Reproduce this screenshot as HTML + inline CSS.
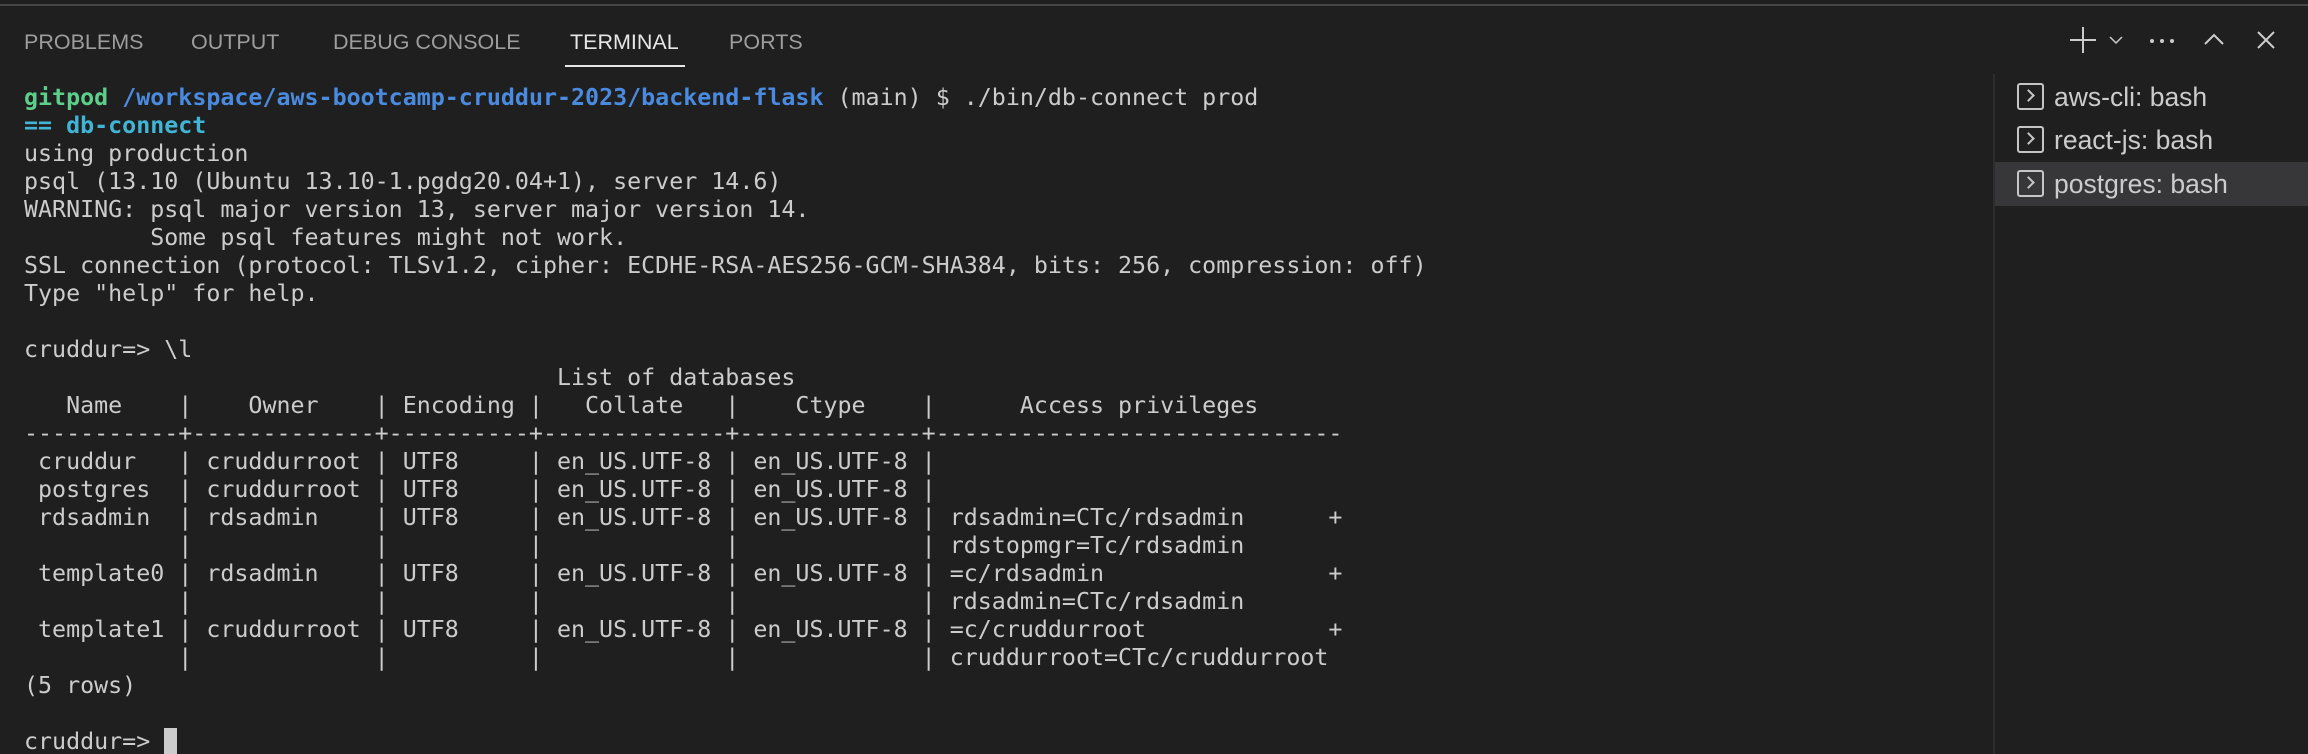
<!DOCTYPE html>
<html><head><meta charset="utf-8"><style>
html,body{margin:0;padding:0;background:#1f1f1f;width:2308px;height:754px;overflow:hidden;position:relative}
.topline{position:absolute;left:0;top:4px;width:2308px;height:2px;background:#464646}
.tab{position:absolute;top:29px;font:21.5px "Liberation Sans",sans-serif;color:#9d9d9d;white-space:nowrap;line-height:26px}
.ul{position:absolute;left:565px;top:65px;width:120px;height:2px;background:#e7e7e7}
pre{position:absolute;left:24px;top:84px;margin:0;font:23.3px/28px "DejaVu Sans Mono","Liberation Mono",monospace;color:#cccccc}
.g{color:#5ccf8a;font-weight:bold}.b{color:#4a8be0;font-weight:bold}.c{color:#40b5d6;font-weight:bold}
.cur{display:inline-block;width:13px;height:26px;background:#cccccc;vertical-align:-5px}
.div{position:absolute;left:1993px;top:74px;width:2px;height:680px;background:#2d2d2d}
.hl{position:absolute;left:1995px;top:162px;width:313px;height:44px;background:#37373a}
.item{position:absolute;left:2017px;font:26.5px "Liberation Sans",sans-serif;color:#cccccc;white-space:nowrap}
.box{display:inline-block;width:23px;height:23px;border:2px solid #c5c5c5;border-radius:3px;vertical-align:-4px;margin-right:10px;position:relative}
.box:after{content:"";position:absolute;left:5px;top:6px;width:7px;height:7px;border-right:2px solid #c5c5c5;border-top:2px solid #c5c5c5;transform:rotate(45deg)}
</style></head><body>
<div class="topline"></div>
<div class="tab" style="left:24px">PROBLEMS</div>
<div class="tab" style="left:191px">OUTPUT</div>
<div class="tab" style="left:333px">DEBUG CONSOLE</div>
<div class="tab" style="left:570px;color:#e7e7e7">TERMINAL</div>
<div class="tab" style="left:729px">PORTS</div>
<div class="ul"></div>
<svg style="position:absolute;left:2050px;top:20px" width="258" height="40" fill="none" stroke="#cccccc" stroke-width="2">
<path d="M20 20H46M33 7V33"/>
<path d="M60 17L66 23L72 17" stroke-width="1.5"/>
<circle cx="102" cy="21" r="2" fill="#ccc" stroke="none"/><circle cx="112" cy="21" r="2" fill="#ccc" stroke="none"/><circle cx="122" cy="21" r="2" fill="#ccc" stroke="none"/>
<path d="M155 24L164 15L173 24"/>
<path d="M208 12L224 28M224 12L208 28"/>
</svg>
<pre><span class="g">gitpod</span> <span class="b">/workspace/aws-bootcamp-cruddur-2023/backend-flask</span> (main) $ ./bin/db-connect prod
<span class="c">== db-connect</span>
using production
psql (13.10 (Ubuntu 13.10-1.pgdg20.04+1), server 14.6)
WARNING: psql major version 13, server major version 14.
         Some psql features might not work.
SSL connection (protocol: TLSv1.2, cipher: ECDHE-RSA-AES256-GCM-SHA384, bits: 256, compression: off)
Type "help" for help.

cruddur=&gt; \l
                                      List of databases
   Name    |    Owner    | Encoding |   Collate   |    Ctype    |      Access privileges      
-----------+-------------+----------+-------------+-------------+-----------------------------
 cruddur   | cruddurroot | UTF8     | en_US.UTF-8 | en_US.UTF-8 | 
 postgres  | cruddurroot | UTF8     | en_US.UTF-8 | en_US.UTF-8 | 
 rdsadmin  | rdsadmin    | UTF8     | en_US.UTF-8 | en_US.UTF-8 | rdsadmin=CTc/rdsadmin      +
           |             |          |             |             | rdstopmgr=Tc/rdsadmin
 template0 | rdsadmin    | UTF8     | en_US.UTF-8 | en_US.UTF-8 | =c/rdsadmin                +
           |             |          |             |             | rdsadmin=CTc/rdsadmin
 template1 | cruddurroot | UTF8     | en_US.UTF-8 | en_US.UTF-8 | =c/cruddurroot             +
           |             |          |             |             | cruddurroot=CTc/cruddurroot
(5 rows)

cruddur=&gt; <span class="cur"></span></pre>
<div class="div"></div>
<div class="hl"></div>
<div class="item" style="top:82px"><span class="box"></span>aws-cli: bash</div>
<div class="item" style="top:125px"><span class="box"></span>react-js: bash</div>
<div class="item" style="top:169px"><span class="box"></span>postgres: bash</div>
</body></html>
